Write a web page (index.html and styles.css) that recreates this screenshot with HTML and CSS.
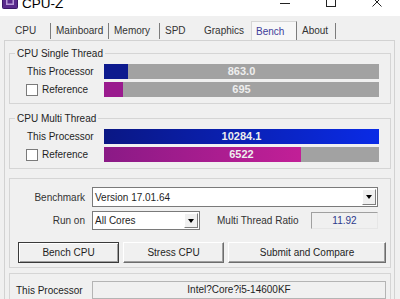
FILE: index.html
```html
<!DOCTYPE html>
<html>
<head>
  <title>CPU-Z</title>
  <meta charset="UTF-8">
  <link rel="stylesheet" href="styles.css">
</head>
<body>
  <div class="titlebar">
    <svg class="app-icon" viewBox="0 0 16 16">
      <rect x="0.5" y="0.5" width="15" height="15" rx="1" fill="#5a2a8c" stroke="#3b1866"/>
      <rect x="4" y="4" width="8" height="8" fill="#b89ad6"/>
      <rect x="5.5" y="5.5" width="5" height="5" fill="#5a2a8c"/>
    </svg>
    <span class="title">CPU-Z</span>
    <div class="controls">
      <span class="ctl"><svg viewBox="0 0 10 12"><path d="M0 6.5h10" stroke="#222"/></svg></span>
      <span class="ctl"><svg viewBox="0 0 10 12"><rect x="0.5" y="0.5" width="9" height="9" fill="none" stroke="#222"/></svg></span>
      <span class="ctl"><svg viewBox="0 0 10 12"><path d="M0.5 0.5l9 9M9.5 0.5l-9 9" stroke="#222"/></svg></span>
    </div>
  </div>

  <div class="tabs">
    <span class="tab">CPU</span>
    <span class="tab">Mainboard</span>
    <span class="tab">Memory</span>
    <span class="tab plain">SPD</span>
    <span class="tab plain">Graphics</span>
    <span class="tab active">Bench</span>
    <span class="tab">About</span>
  </div>

  <div class="page">
    <!-- single thread -->
    <fieldset class="group">
      <legend>CPU Single Thread</legend>
      <div class="scores">
        <span class="label">This Processor</span>
        <div class="bar">
          <div class="fill blue" style="width:8.8%"></div>
          <span class="val">863.0</span>
        </div>
        <span class="check"><span class="box"></span>Reference</span>
        <div class="bar">
          <div class="fill purple" style="width:6.9%"></div>
          <span class="val">695</span>
        </div>
      </div>
    </fieldset>

    <!-- multi thread -->
    <fieldset class="group multi">
      <legend>CPU Multi Thread</legend>
      <div class="scores">
        <span class="label">This Processor</span>
        <div class="bar">
          <div class="fill blue-grad" style="width:100%"></div>
          <span class="val">10284.1</span>
        </div>
        <span class="check"><span class="box"></span>Reference</span>
        <div class="bar">
          <div class="fill purple-grad" style="width:71.5%"></div>
          <span class="val">6522</span>
        </div>
      </div>
    </fieldset>

    <div class="group run">
      <div class="form">
        <span class="flabel">Benchmark</span>
        <div class="combo">Version 17.01.64<span class="drop"></span></div>
        <span class="flabel">Run on</span>
        <div class="ratio-row">
          <div class="combo short">All Cores<span class="drop"></span></div>
          <span class="ratio-label">Multi Thread Ratio</span>
          <span class="ratio">11.92</span>
        </div>
      </div>
      <div class="buttons">
        <button class="btn default">Bench CPU</button>
        <button class="btn">Stress CPU</button>
        <button class="btn wide">Submit and Compare</button>
      </div>
    </div>

    <div class="group proc">
      <div class="proc-row">
        <span>This Processor</span>
        <div class="proc-box">Intel?Core?i5-14600KF</div>
      </div>
    </div>
  </div>
</body>
</html>
```

FILE: styles.css
```css
* { box-sizing: border-box; }

body {
    margin: 0;
    width: 400px;
    height: 299px;
    overflow: hidden;
    background: #f0f0f0;
    font: 10px "Liberation Sans", Arial, sans-serif;
    color: #1e1e1e;
}

/* title bar (top is cut off in the shot) */
.titlebar { height: 16px; background: #fff; display: flex; overflow: hidden; }
.app-icon { width: 16px; height: 16px; margin: -7px 0 0 2px; flex: none; }
.title { margin: -4px 0 0 4px; font-size: 13.5px; line-height: 16px; color: #000; }
.controls { margin-left: auto; display: flex; }
.ctl { width: 46px; display: flex; justify-content: center; }
.ctl svg { width: 10px; height: 12px; margin-top: -3px; }

/* tabs */
.tabs {
    height: 24px;
    display: grid;
    grid-template-columns: 41px 58px 51px 39px 52px 46px 39px;
    align-items: end;
    padding-left: 10px;
}
.tab {
    height: 16px;
    line-height: 15px;
    padding-left: 5px;
    margin-bottom: 1px;
    border-right: 1px solid #7c7c7c;
    color: #333;
    white-space: nowrap;
}
.tab.plain { border-right-color: transparent; }
.tab.active {
    color: #3d3d9a;
    height: 19px;
    line-height: 19px;
    margin-bottom: 0;
    background: #f7f7f7;
    border-left: 1px solid #d6d6d6;
    border-top: 1px solid #d6d6d6;
    padding-left: 4px;
}

/* tab page */
.page {
    margin: 0 5px 0 4px;
    height: 259px;
    border: 1px solid #d2d2d2;
    border-bottom: none;
    padding: 6px 3px 0 4px;
}

.group { margin: 0; padding: 0; border: 1px solid #d5d5d5; min-width: 0; }
.group legend { margin-left: 5px; padding: 0 2px; line-height: 13px; }
.group.multi { margin-top: 8px; }
.group.run { margin-top: 9px; }
.group.proc { margin-top: 5px; height: 40px; border-bottom: none; }

.scores {
    display: grid;
    grid-template-columns: 77px 1fr;
    row-gap: 3px;
    align-items: center;
    padding: 4px 11px 6px 17px;
}
.check { display: flex; align-items: center; margin-left: -1px; }
.check .box {
    width: 12px; height: 12px;
    border: 1px solid #7a7a7a;
    background: #fff;
    margin-right: 4px;
}

.bar { display: grid; height: 15px; background: #a2a2a2; }
.bar > * { grid-area: 1 / 1; }
.fill { height: 100%; }
.blue { background: #0d1a8e; }
.purple { background: #9a1b8e; }
.blue-grad { background: linear-gradient(to right, #0a1784, #0a2be6); }
.purple-grad { background: linear-gradient(to right, #8a1a86, #c21f97); }
.val {
    text-align: center;
    line-height: 15px;
    font-size: 11px;
    font-weight: bold;
    color: #eeeeee;
}

/* benchmark options */
.form {
    display: grid;
    grid-template-columns: 75px 1fr;
    column-gap: 7px;
    row-gap: 4px;
    align-items: center;
    padding: 8px 12px 0 0;
}
.flabel { text-align: right; color: #333; }
.combo {
    height: 20px;
    border: 1px solid #7a7a7a;
    background: #fff;
    display: flex;
    align-items: center;
    padding-left: 2px;
}
.combo.short { width: 108px; height: 19px; }
.drop {
    margin: 1px 1px 1px auto;
    align-self: stretch;
    width: 14px;
    background: #f0f0f0;
    border: 1px solid;
    border-color: #fff #7e7e7e #7e7e7e #fff;
    display: flex;
    align-items: center;
    justify-content: center;
}
.drop::after {
    content: "";
    border-left: 3.5px solid transparent;
    border-right: 3.5px solid transparent;
    border-top: 4px solid #000;
}
.ratio-row { display: flex; align-items: center; }
.ratio-label { margin-left: 17px; color: #333; }
.ratio {
    margin-left: auto;
    width: 67px;
    height: 17px;
    line-height: 15px;
    text-align: center;
    color: #2d3a8c;
    border: 1px solid;
    border-color: #a0a0a0 #e6e6e6 #e6e6e6 #a0a0a0;
}

.buttons { display: flex; gap: 4px; padding: 12px 4px 4px 8px; }
.btn {
    height: 21px;
    width: 101px;
    font: inherit;
    color: #1e1e1e;
    background: #f0f0f0;
    border: 1px solid;
    border-color: #fff #6d6d6d #6d6d6d #fff;
    box-shadow: inset -1px -1px #a0a0a0;
}
.btn.default { border-color: #3a3a3a; box-shadow: inset 1px 1px #fff, inset -1px -1px #a0a0a0; }
.btn.wide { flex: 1; }

.proc-row {
    display: grid;
    grid-template-columns: 76px 1fr;
    align-items: center;
    padding: 7px 4px 0 6px;
}
.proc-box {
    height: 18px;
    line-height: 16px;
    text-align: center;
    border: 1px solid #b4b4b4;
}
```
